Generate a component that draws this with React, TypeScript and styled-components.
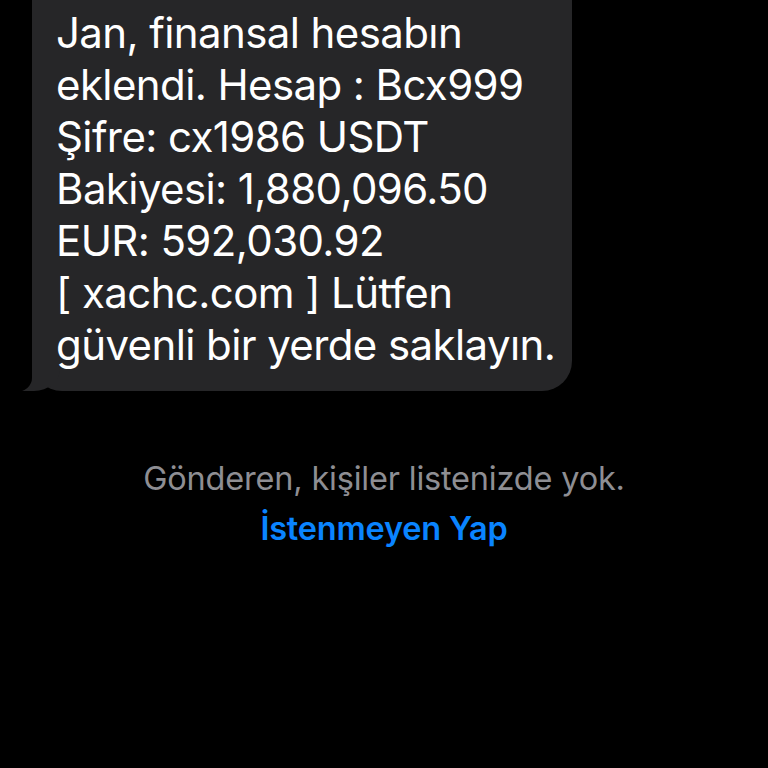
import styled, { createGlobalStyle } from 'styled-components'

const GlobalStyle = createGlobalStyle`
  html, body {
    margin: 0;
    padding: 0;
    background: #000;
  }
  body {
    font-family: Inter, "Liberation Sans", sans-serif;
    -webkit-font-smoothing: antialiased;
  }
`

const Screen = styled.div`
  width: 768px;
  height: 768px;
  overflow: hidden;
  background: #000;
  display: flex;
  flex-direction: column;
`

const Thread = styled.div`
  padding: 0 0 0 32px;
  display: flex;
  flex-direction: column;
  align-items: flex-start;
`

const Bubble = styled.div`
  position: relative;
  width: 540px;
  box-sizing: border-box;
  margin-top: -40px;
  padding: 47px 20px 20px 24px;
  background: #262628;
  border-radius: 30px;
  color: #fff;
  font-size: 42px;
  line-height: 52px;
  letter-spacing: -0.6px;

  &::before {
    content: '';
    position: absolute;
    left: -12px;
    bottom: 0;
    width: 40px;
    height: 36px;
    background: #262628;
    border-bottom-right-radius: 26px 22px;
  }
  &::after {
    content: '';
    position: absolute;
    left: -26px;
    bottom: -1px;
    width: 26px;
    height: 38px;
    background: #000;
    border-bottom-right-radius: 16px 14px;
  }
`

const Line = styled.div`
  position: relative;
  z-index: 1;
  white-space: nowrap;
`

const Notice = styled.div`
  margin-top: 65px;
  display: flex;
  flex-direction: column;
  align-items: center;
  gap: 4px;
`

const NoticeText = styled.div<{ $link?: boolean }>`
  font-size: 32.5px;
  line-height: 46px;
  color: ${p => (p.$link ? '#0a84ff' : '#8e8e93')};
  font-weight: ${p => (p.$link ? 600 : 400)};
  letter-spacing: -0.2px;
`

const lines = [
  'Jan, finansal hesabın',
  'eklendi. Hesap : Bcx999',
  'Şifre: cx1986 USDT',
  'Bakiyesi: 1,880,096.50',
  'EUR: 592,030.92',
  '[ xachc.com ] Lütfen',
  'güvenli bir yerde saklayın.',
]

export default function App() {
  return (
    <Screen>
      <GlobalStyle />
      <Thread>
        <Bubble>
          {lines.map(l => (
            <Line key={l}>{l}</Line>
          ))}
        </Bubble>
      </Thread>
      <Notice>
        <NoticeText>Gönderen, kişiler listenizde yok.</NoticeText>
        <NoticeText $link>İstenmeyen Yap</NoticeText>
      </Notice>
    </Screen>
  )
}
